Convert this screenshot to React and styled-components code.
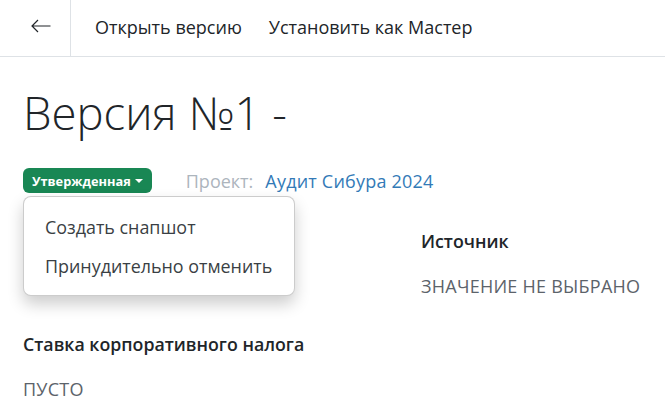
import React from 'react';
import styled, { createGlobalStyle } from 'styled-components';

const GlobalStyle = createGlobalStyle`
  html, body {
    margin: 0;
    padding: 0;
    background: #fff;
    overflow: hidden;
  }
  body {
    font-family: "Open Sans", "Noto Sans", sans-serif;
    color: #212529;
  }
`;

const Page = styled.div`
  width: 665px;
  height: 416px;
  overflow: hidden;
`;

const Toolbar = styled.div`
  display: flex;
  align-items: stretch;
  height: 56px;
  border-bottom: 1px solid #dee2e6;
`;

const BackButton = styled.div`
  display: flex;
  align-items: center;
  justify-content: flex-start;
  width: 71px;
  padding: 0 0 4px 31px;
  box-sizing: border-box;
  border-right: 1px solid #dee2e6;
  color: #212529;
`;

const ToolbarActions = styled.div`
  display: flex;
  align-items: center;
  gap: 27px;
  padding: 0 0 2px 24px;
`;

const ToolbarAction = styled.span`
  font-size: 18px;
  color: #212529;
`;

const Content = styled.div`
  padding: 23px 23px 0;
`;

const Title = styled.h1`
  margin: 0;
  font-size: 45.5px;
  line-height: 64px;
  font-weight: 300;
  color: #212529;
`;

const StatusRow = styled.div`
  position: relative;
  display: flex;
  align-items: center;
  margin-top: 24px;
  height: 25px;
`;

const StatusBadge = styled.div`
  display: flex;
  align-items: center;
  gap: 4px;
  height: 25px;
  padding: 0 9px;
  box-sizing: border-box;
  border-radius: 6px;
  background: #198754;
  color: #fff;
  font-size: 12.8px;
  font-weight: 700;
`;

const Caret = styled.span`
  border-top: 4px solid #fff;
  border-left: 4px solid transparent;
  border-right: 4px solid transparent;
`;

const ProjectLabel = styled.span`
  margin-left: 34px;
  font-size: 18px;
  color: #adb5bd;
`;

const ProjectLink = styled.a`
  margin-left: 12px;
  font-size: 18px;
  letter-spacing: 0.2px;
  color: #337ab7;
  text-decoration: none;
`;

const Menu = styled.div`
  position: absolute;
  top: 28px;
  left: 0;
  width: 272px;
  height: 100px;
  padding: 12px 0;
  box-sizing: border-box;
  background: #fff;
  border: 1px solid rgba(0, 0, 0, 0.2);
  border-radius: 8px;
  box-shadow: 0 8px 16px rgba(0, 0, 0, 0.2);
  z-index: 2;
`;

const MenuItem = styled.div`
  padding: 0 21px;
  height: 39px;
  line-height: 37px;
  font-size: 17.9px;
  white-space: nowrap;
  color: #3a3f44;
`;

const Fields = styled.div`
  display: grid;
  grid-template-columns: 398px 1fr;
  grid-auto-rows: 103px;
  margin-top: 35px;
`;

const Field = styled.div`
  display: flex;
  flex-direction: column;
  gap: 18px;
`;

const FieldLabel = styled.div`
  font-size: 17.75px;
  line-height: 27px;
  font-weight: 600;
  white-space: nowrap;
  color: #212529;
`;

const FieldValue = styled.div`
  font-size: 18px;
  line-height: 27px;
  letter-spacing: 0.25px;
  white-space: nowrap;
  color: #5c636a;
`;

const ArrowLeft = () => (
  <svg width="20" height="14" viewBox="0 0 20 14" fill="none" stroke="currentColor" strokeWidth="1.2">
    <path d="M19.5 7H1M7 1 1 7l6 6" />
  </svg>
);

const App = () => (
  <Page>
    <GlobalStyle />
    <Toolbar>
      <BackButton>
        <ArrowLeft />
      </BackButton>
      <ToolbarActions>
        <ToolbarAction>Открыть версию</ToolbarAction>
        <ToolbarAction>Установить как Мастер</ToolbarAction>
      </ToolbarActions>
    </Toolbar>
    <Content>
      <Title>Версия №1 -</Title>
      <StatusRow>
        <StatusBadge>
          Утвержденная
          <Caret />
        </StatusBadge>
        <ProjectLabel>Проект:</ProjectLabel>
        <ProjectLink href="#">Аудит Сибура 2024</ProjectLink>
        <Menu>
          <MenuItem>Создать снапшот</MenuItem>
          <MenuItem>Принудительно отменить</MenuItem>
        </Menu>
      </StatusRow>
      <Fields>
        {/* the first field is hidden under the open menu */}
        <Field />
        <Field>
          <FieldLabel>Источник</FieldLabel>
          <FieldValue>ЗНАЧЕНИЕ НЕ ВЫБРАНО</FieldValue>
        </Field>
        <Field>
          <FieldLabel>Ставка корпоративного налога</FieldLabel>
          <FieldValue>ПУСТО</FieldValue>
        </Field>
      </Fields>
    </Content>
  </Page>
);

export default App;
